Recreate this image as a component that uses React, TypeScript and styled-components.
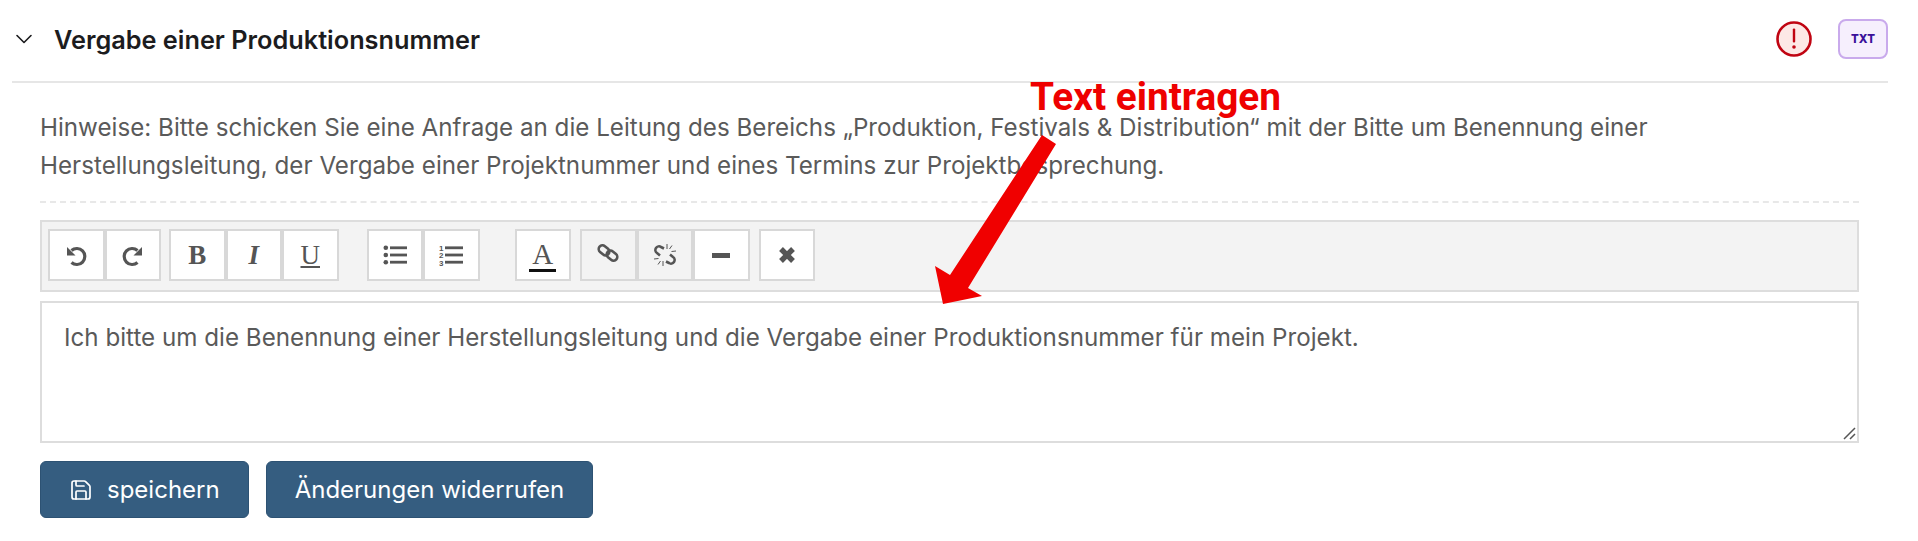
import React from 'react';
import styled, { createGlobalStyle } from 'styled-components';
import { ChevronDown, Save } from 'lucide-react';

const GlobalStyle = createGlobalStyle`
  html, body {
    margin: 0;
    padding: 0;
    background: #fff;
    font-family: Inter, "Liberation Sans", sans-serif;
  }
`;

const Page = styled.div`
  position: relative;
  width: 1918px;
  height: 541px;
  overflow: hidden;
`;

const Header = styled.header`
  height: 83px;
  margin: 0 30px 0 12px;
  padding-bottom: 3px;
  box-sizing: border-box;
  border-bottom: 2px solid #e6e6e6;
  display: flex;
  align-items: center;
  color: #1c1c1e;
`;

const Toggle = styled.span`
  width: 43px;
  margin-left: -2px;
  margin-right: 1px;
  display: flex;
  align-items: center;
`;

const Title = styled.h2`
  flex: 1;
  margin: 0;
  font-size: 25.3px;
  font-weight: 600;
`;

const StatusIcon = styled.svg`
  width: 38px;
  height: 38px;
  margin-right: 25px;
`;

const TypeBadge = styled.span`
  width: 46px;
  height: 36px;
  border: 2px solid #c9aaec;
  border-radius: 8px;
  background: #f6effd;
  color: #3a109a;
  font-size: 11.5px;
  font-weight: 800;
  display: flex;
  align-items: center;
  justify-content: center;
`;

const Body = styled.section`
  margin: 0 59px 0 40px;
`;

const Hint = styled.p`
  margin: 0;
  padding: 26px 0 16px;
  border-bottom: 2px dashed #e8e8e8;
  font-size: 24.2px;
  line-height: 38px;
  color: #5a5a5a;
`;

const Toolbar = styled.div`
  margin-top: 17px;
  height: 72px;
  box-sizing: border-box;
  padding: 7px 6px;
  border: 2px solid #ddd;
  background: #f3f3f3;
  display: flex;
  align-items: flex-start;
`;

const Group = styled.div<{ $gap?: number }>`
  display: flex;
  margin-right: ${({ $gap }) => $gap ?? 9}px;
`;

const ToolButton = styled.button<{ $muted?: boolean }>`
  width: 56.5px;
  height: 52px;
  padding: 0;
  border: 2px solid #d8d8d8;
  background: ${({ $muted }) => ($muted ? '#f3f3f3' : '#fff')};
  color: #555;
  font-family: "Liberation Serif", serif;
  font-size: 27px;
  display: flex;
  align-items: center;
  justify-content: center;
`;

const ColorA = styled.span`
  display: flex;
  flex-direction: column;
  align-items: center;
  font-size: 29px;
  line-height: 26px;
  margin-top: 2px;

  &::after {
    content: '';
    width: 27px;
    height: 3px;
    margin-top: 2px;
    background: #111;
  }
`;

const Rule = styled.span`
  width: 18px;
  height: 5px;
  background: #555;
`;

const Glyph = styled.svg<{ $flip?: boolean }>`
  width: 24px;
  height: 24px;
  transform: ${({ $flip }) => ($flip ? 'scaleX(-1)' : 'none')};
`;

const Editor = styled.div`
  position: relative;
  margin-top: 9px;
  height: 142px;
  box-sizing: border-box;
  padding: 18px 22px;
  border: 2px solid #ddd;
  font-size: 24.2px;
  line-height: 34px;
  color: #5a5a5a;
`;

const ResizeHandle = styled.svg`
  position: absolute;
  right: 1px;
  bottom: 1px;
  width: 14px;
  height: 14px;
`;

const Actions = styled.div`
  margin-top: 18px;
  display: flex;
  gap: 17px;
`;

const ActionButton = styled.button`
  height: 57px;
  padding: 0 28px;
  border: 1px solid #2d5273;
  border-radius: 6px;
  background: #355d80;
  color: #fff;
  font-family: Inter, "Liberation Sans", sans-serif;
  font-size: 24px;
  display: flex;
  align-items: center;
  gap: 14px;
`;

const Callout = styled.div`
  position: absolute;
  left: 1030px;
  top: 73px;
  color: #ee0000;
  font-family: Roboto, "Liberation Sans", sans-serif;
  font-size: 38.8px;
  font-weight: 700;
  line-height: 48px;
`;

const CalloutArrow = styled.svg`
  position: absolute;
  left: 930px;
  top: 130px;
  width: 130px;
  height: 180px;
`;

const HistoryIcon: React.FC<{ flip?: boolean }> = ({ flip }) => (
  <Glyph viewBox="0 0 24 24" $flip={flip}>
    <path d="M7.5 7.5 A8 8 0 1 1 7.5 19.5" fill="none" stroke="#555" strokeWidth="3.2" />
    <polygon points="3,4 3,12.5 11.5,12.5" fill="#555" />
  </Glyph>
);

const BulletIcon: React.FC = () => (
  <Glyph viewBox="0 0 24 24">
    <g fill="#555">
      <circle cx="2.8" cy="4.8" r="2.3" />
      <circle cx="2.8" cy="12" r="2.3" />
      <circle cx="2.8" cy="19.2" r="2.3" />
      <rect x="7" y="3.4" width="17" height="2.8" />
      <rect x="7" y="10.6" width="17" height="2.8" />
      <rect x="7" y="17.8" width="17" height="2.8" />
    </g>
  </Glyph>
);

const NumberIcon: React.FC = () => (
  <Glyph viewBox="0 0 24 24">
    <g fill="#555">
      <text x="0" y="7.5" fontSize="8" fontWeight="700" fontFamily="Liberation Sans">1</text>
      <text x="0" y="15" fontSize="8" fontWeight="700" fontFamily="Liberation Sans">2</text>
      <text x="0" y="22.5" fontSize="8" fontWeight="700" fontFamily="Liberation Sans">3</text>
      <rect x="6" y="3.4" width="18" height="2.8" />
      <rect x="6" y="10.6" width="18" height="2.8" />
      <rect x="6" y="17.8" width="18" height="2.8" />
    </g>
  </Glyph>
);

const LinkIcon: React.FC = () => (
  <Glyph viewBox="0 0 24 24">
    <g fill="none" stroke="#555" strokeWidth="2.6">
      <rect x="2.5" y="3.5" width="11.5" height="7.5" rx="3.7" transform="rotate(40 8 7)" />
      <rect x="10" y="9" width="11.5" height="7.5" rx="3.7" transform="rotate(40 16 13)" />
    </g>
  </Glyph>
);

const UnlinkIcon: React.FC = () => (
  <Glyph viewBox="0 0 24 24">
    <g fill="none" stroke="#555">
      <path d="M11 5.5 L8 4 A3.6 3.6 0 0 0 4 10 L7 12.5" strokeWidth="2.6" />
      <path d="M13 18.5 L16 20 A3.6 3.6 0 0 0 20 14 L17 11.5" strokeWidth="2.6" />
      <path d="M14 1 L14 6 M19 2.5 L16.5 6 M23 8 L18.5 8.5 M1 16 L5.5 15.5 M5 21.5 L7.5 18 M10 23 L10 18" strokeWidth="1" />
    </g>
  </Glyph>
);

const RemoveIcon: React.FC = () => (
  <Glyph viewBox="0 0 24 24">
    <path d="M6 6 L18 18 M18 6 L6 18" stroke="#555" strokeWidth="5.4" />
  </Glyph>
);

const App: React.FC = () => (
  <Page>
    <GlobalStyle />
    <Header>
      <Toggle>
        <ChevronDown size={28} strokeWidth={1.4} />
      </Toggle>
      <Title>Vergabe einer Produktionsnummer</Title>
      <StatusIcon viewBox="0 0 38 38">
        <circle cx="19" cy="19" r="16.5" fill="#fde8e6" stroke="#c00412" strokeWidth="2.6" />
        <rect x="17.8" y="8.5" width="2.4" height="14" rx="1" fill="#c00412" />
        <circle cx="19" cy="27" r="1.8" fill="#c00412" />
      </StatusIcon>
      <TypeBadge>TXT</TypeBadge>
    </Header>
    <Body>
      <Hint>
        Hinweise: Bitte schicken Sie eine Anfrage an die Leitung des Bereichs „Produktion, Festivals &amp; Distribution“ mit der Bitte um Benennung einer Herstellungsleitung, der Vergabe einer Projektnummer und eines Termins zur Projektbesprechung.
      </Hint>
      <Toolbar>
        <Group $gap={8}>
          <ToolButton><HistoryIcon /></ToolButton>
          <ToolButton><HistoryIcon flip /></ToolButton>
        </Group>
        <Group $gap={28}>
          <ToolButton><b>B</b></ToolButton>
          <ToolButton><b><i>I</i></b></ToolButton>
          <ToolButton><u>U</u></ToolButton>
        </Group>
        <Group $gap={35}>
          <ToolButton><BulletIcon /></ToolButton>
          <ToolButton><NumberIcon /></ToolButton>
        </Group>
        <Group>
          <ToolButton><ColorA>A</ColorA></ToolButton>
        </Group>
        <Group>
          <ToolButton $muted><LinkIcon /></ToolButton>
          <ToolButton $muted><UnlinkIcon /></ToolButton>
          <ToolButton><Rule /></ToolButton>
        </Group>
        <Group>
          <ToolButton><RemoveIcon /></ToolButton>
        </Group>
      </Toolbar>
      <Editor>
        Ich bitte um die Benennung einer Herstellungsleitung und die Vergabe einer Produktionsnummer für mein Projekt.
        <ResizeHandle viewBox="0 0 14 14">
          <path d="M2 13 L13 2 M8 13 L13 8" stroke="#555" strokeWidth="1.5" />
        </ResizeHandle>
      </Editor>
      <Actions>
        <ActionButton><Save size={24} strokeWidth={1.7} />speichern</ActionButton>
        <ActionButton>Änderungen widerrufen</ActionButton>
      </Actions>
    </Body>
    <Callout>Text eintragen</Callout>
    <CalloutArrow viewBox="930 130 130 180">
      <polygon points="1042,135 1056,144 968,288 982,296 943,304 935,266 950,275" fill="#f00000" />
    </CalloutArrow>
  </Page>
);

export default App;
